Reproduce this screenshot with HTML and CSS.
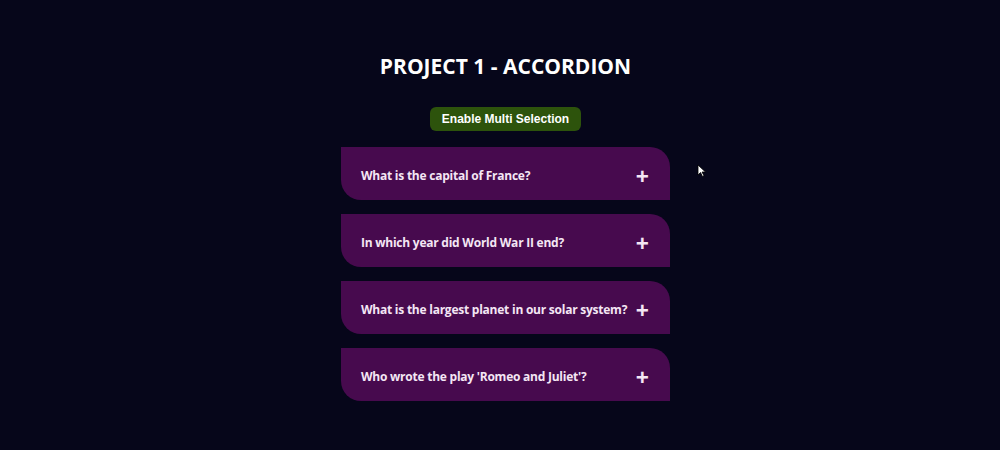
FILE: index.html
```html
<!DOCTYPE html>
<html>
<head>
<meta charset="utf-8">
<link rel="stylesheet" href="styles.css">
</head>
<body>
<div class="page">
  <h1 class="title">PROJECT 1 - ACCORDION</h1>
  <button class="multi-btn">Enable Multi Selection</button>
  <div class="accordion">
    <div class="item"><span class="q">What is the capital of France?</span><span class="plus">+</span></div>
    <div class="item"><span class="q">In which year did World War II end?</span><span class="plus">+</span></div>
    <div class="item"><span class="q">What is the largest planet in our solar system?</span><span class="plus">+</span></div>
    <div class="item"><span class="q">Who wrote the play 'Romeo and Juliet'?</span><span class="plus">+</span></div>
  </div>
</div>
<svg class="cursor" width="10" height="14" viewBox="0 0 10 14"><path d="M1 1 L1 11 L3.5 8.5 L5.5 12.5 L7 11.8 L5 8 L8.5 8 Z" fill="#fff" stroke="#000" stroke-width="0.8"/></svg>
</body>
</html>
```
FILE: styles.css
```css
html, body {
  margin: 0;
  padding: 0;
  background: #06061a;
  height: 100%;
}
body {
  position: relative;
  font-family: "Open Sans", "Noto Sans", sans-serif;
  color: #fff;
}
.page {
  display: flex;
  flex-direction: column;
  align-items: center;
  padding-top: 52px;
  padding-left: 11px;
}
.title {
  margin: 0;
  font-size: 21px;
  font-weight: 700;
  line-height: 28px;
}
.multi-btn {
  margin-top: 27px;
  width: 151px;
  height: 24px;
  border: none;
  border-radius: 6px;
  background: #2d530c;
  color: #fff;
  font-family: "Liberation Sans", Arial, sans-serif;
  font-weight: 700;
  font-size: 12px;
  padding: 0;
}
.accordion {
  margin-top: 16px;
  width: 329px;
  display: flex;
  flex-direction: column;
  gap: 14px;
}
.item {
  height: 53px;
  background: #470a4e;
  border-radius: 0 20px 0 20px;
  display: flex;
  align-items: center;
  justify-content: space-between;
  padding: 3px 21px 0 20px;
  box-sizing: border-box;
}
.q {
  font-size: 12px;
  font-weight: 700;
  color: #f4e6f4;
  letter-spacing: -0.24px;
}
.plus {
  font-size: 23px;
  font-weight: 700;
  line-height: 1;
  color: #f4e6f4;
  margin-top: 3px;
}
.cursor {
  position: absolute;
  left: 697px;
  top: 164px;
}
```
